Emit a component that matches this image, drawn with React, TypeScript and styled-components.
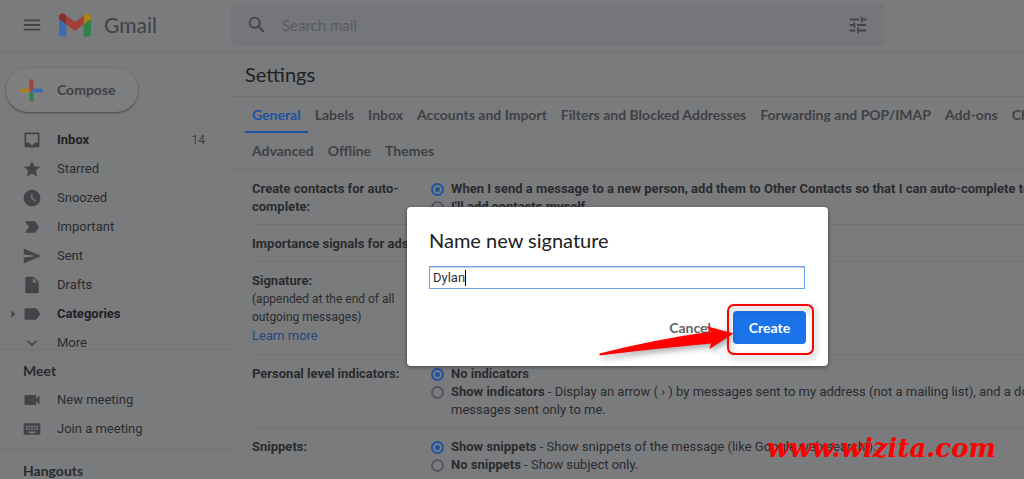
import React from 'react';
import styled, { createGlobalStyle } from 'styled-components';
import {
  MdArrowRight,
  MdExpandMore,
  MdInbox,
  MdInsertDriveFile,
  MdKeyboard,
  MdLabel,
  MdLabelImportant,
  MdMenu,
  MdSearch,
  MdSend,
  MdStar,
  MdTune,
  MdVideocam,
  MdWatchLater,
} from 'react-icons/md';

const color = {
  page: '#7a7b7d',
  field: '#747679',
  raised: '#7d7e80',
  line: '#717274',
  ink: '#202124',
  text: '#2a2b2e',
  muted: '#3f4144',
  icon: '#434447',
  hint: '#595b5e',
  blue: '#1d52a0',
  link: '#26457f',
  accent: '#1a73e8',
  mark: '#ff0000',
  logoRed: '#a1413a',
  logoDarkRed: '#86302b',
  logoYellow: '#aa821c',
  logoGreen: '#317f49',
  logoBlue: '#4069b0',
};

const display = "Lato, 'Open Sans', sans-serif";
const body = "Roboto, 'Liberation Sans', sans-serif";

const GlobalStyle = createGlobalStyle`
  * { box-sizing: border-box; }
  html, body { margin: 0; height: 100%; overflow: hidden; background: ${color.page}; }
  body { font-family: ${body}; font-size: 13px; color: ${color.text}; }
  #root { height: 100%; }
  button, input { font: inherit; color: inherit; }
`;

const Page = styled.div`
  position: relative;
  display: flex;
  flex-direction: column;
  height: 100vh;
  overflow: hidden;
`;

const Header = styled.header`
  flex: none;
  display: flex;
  align-items: flex-start;
  border-bottom: 1px solid ${color.line};
  height: 53px;
`;

const Brand = styled.div`
  flex: none;
  display: flex;
  align-items: center;
  width: 231px;
  height: 49px;
  padding-left: 21px;
`;

const IconButton = styled.button`
  display: flex;
  padding: 0;
  border: 0;
  background: none;
  color: ${color.icon};
  font-size: 22px;
`;

const Logo = styled.svg`
  display: block;
  width: 32px;
  height: 24px;
  margin: 0 13px 0 16px;
`;

const BrandName = styled.span`
  font: 400 21px/24px ${display};
  color: ${color.muted};
`;

const SearchBar = styled.form`
  flex: 0 1 653px;
  display: flex;
  align-items: center;
  gap: 12px;
  height: 43px;
  margin-top: 3px;
  padding: 0 15px;
  border-radius: 6px;
  background: ${color.field};
`;

const SearchInput = styled.input`
  flex: 1;
  min-width: 0;
  border: 0;
  outline: 0;
  background: none;
  font: 400 15px/20px ${display};
  &::placeholder { color: ${color.hint}; opacity: 1; }
`;

const Columns = styled.div`
  flex: 1;
  display: flex;
  min-height: 0;
`;

const Sidebar = styled.aside`
  flex: none;
  display: flex;
  flex-direction: column;
  width: 231px;
`;

const Compose = styled.button`
  flex: none;
  align-self: flex-start;
  display: flex;
  align-items: center;
  gap: 14px;
  height: 44px;
  margin: 15px 0 13px 6px;
  padding: 0 22px 0 14px;
  border: 0;
  border-radius: 22px;
  background: ${color.raised};
  box-shadow: 0 1px 2px rgba(32, 33, 36, 0.4), 0 1px 3px rgba(32, 33, 36, 0.2);
  color: ${color.muted};
  font: 700 14px/20px ${display};
`;

const PlusIcon = styled.svg`
  display: block;
  width: 23px;
  height: 23px;
`;

const Folders = styled.nav`
  flex: none;
  height: 224px;
  overflow: hidden;
`;

const NavLink = styled.a<{ $strong?: boolean }>`
  display: grid;
  grid-template-columns: 22px 35px 1fr auto;
  align-items: center;
  height: 29px;
  padding-right: 26px;
  color: ${(p) => (p.$strong ? color.ink : color.text)};
  font-size: 13px;
  font-weight: ${(p) => (p.$strong ? 700 : 400)};
  text-decoration: none;
`;

const Caret = styled.span`
  display: flex;
  justify-content: flex-end;
  color: ${color.icon};
  font-size: 18px;
`;

const NavIcon = styled.span`
  display: flex;
  color: ${color.icon};
  font-size: 20px;
`;

const Count = styled.span`
  color: ${color.muted};
  font-size: 12px;
  font-weight: 400;
`;

const SideSection = styled.section`
  flex: none;
  padding: 7px 0 6px;
  border-top: 1px solid ${color.line};
`;

const SideTitle = styled.h2`
  margin: 0;
  padding-left: 23px;
  color: ${color.text};
  font: 700 14px/28px ${display};
`;

const Main = styled.main`
  flex: 1;
  min-width: 0;
  overflow: hidden;
`;

const Title = styled.h1`
  margin: 0;
  padding: 0 14px;
  border-bottom: 1px solid ${color.line};
  color: ${color.ink};
  font: 400 20px/43px ${display};
  height: 44px;
`;

const Tabs = styled.nav`
  padding: 0 14px;
  border-bottom: 1px solid ${color.line};
`;

const TabRow = styled.div`
  display: flex;
  white-space: nowrap;
`;

const Tab = styled.a<{ $active?: boolean }>`
  height: 36px;
  padding: 0 7px;
  border-bottom: 2px solid ${(p) => (p.$active ? color.blue : 'transparent')};
  color: ${(p) => (p.$active ? color.blue : color.muted)};
  font: 700 14px/36px ${display};
  text-decoration: none;
`;

const Rows = styled.div`
  min-width: 900px;
  padding-left: 21px;
`;

const Setting = styled.section`
  display: grid;
  grid-template-columns: 179px 1fr;
  padding: 10px 0 8px;
  border-bottom: 1px solid ${color.line};
  line-height: 18px;
`;

const SettingName = styled.h3`
  margin: 0;
  color: ${color.text};
  font-size: 13px;
  font-weight: 700;
  white-space: pre;
`;

const Note = styled.p`
  margin: 0;
  font-size: 12px;
  white-space: pre;
`;

const TextLink = styled.a`
  display: block;
  line-height: 20px;
  color: ${color.link};
  text-decoration: none;
`;

const Option = styled.label`
  display: flex;
  align-items: flex-start;
  gap: 7px;
  white-space: pre;
`;

const Radio = styled.input`
  appearance: none;
  flex: none;
  width: 13px;
  height: 13px;
  margin: 3px 0 0;
  border: 2px solid #55565d;
  border-radius: 50%;
  &:checked {
    border-color: ${color.blue};
    background: radial-gradient(circle, ${color.blue} 0 2px, transparent 3px);
  }
`;

const Dialog = styled.div`
  position: absolute;
  top: 207px;
  left: 407px;
  width: 421px;
  padding: 22px;
  border-radius: 4px;
  background: #fff;
  box-shadow: 0 1px 4px rgba(0, 0, 0, 0.45);
`;

const DialogTitle = styled.h2`
  margin: 0 0 14px;
  color: ${color.ink};
  font: 400 20px/23px ${display};
`;

const NameField = styled.div`
  display: flex;
  align-items: center;
  height: 23px;
  margin-right: 1px;
  padding-left: 3px;
  border: 1px solid #6ea1f7;
  box-shadow: inset 0 1px 1px #c8ccd4;
  font-size: 13px;
`;

const NameInput = styled.input`
  field-sizing: content;
  padding: 0;
  border: 0;
  outline: 0;
  background: none;
  color: #333;
`;

const TextCursor = styled.span`
  width: 1px;
  height: 16px;
  background: #000;
`;

const Actions = styled.div`
  display: flex;
  justify-content: flex-end;
  align-items: center;
  gap: 22px;
  margin-top: 22px;
`;

const Cancel = styled.button`
  padding: 0;
  border: 0;
  background: none;
  color: #5f6368;
  font: 700 14px/20px ${display};
`;

const Create = styled.button`
  width: 73px;
  height: 33px;
  padding: 0;
  border: 0;
  border-radius: 4px;
  background: ${color.accent};
  color: #fff;
  font: 700 14px/20px ${display};
`;

const Callout = styled.svg`
  position: absolute;
  top: 90px;
  left: 185px;
  width: 230px;
  height: 65px;
  overflow: visible;
  pointer-events: none;
  filter: drop-shadow(2px 3px 3px rgba(0, 0, 0, 0.35));
`;

const Watermark = styled.div`
  position: absolute;
  right: 28px;
  bottom: 15px;
  color: ${color.mark};
  font: italic 700 26px/32px 'DejaVu Serif', serif;
`;

type Folder = {
  label: string;
  icon: React.ReactNode;
  strong?: boolean;
  count?: string;
  expandable?: boolean;
};

const folders: Folder[] = [
  { label: 'Inbox', icon: <MdInbox />, strong: true, count: '14' },
  { label: 'Starred', icon: <MdStar /> },
  { label: 'Snoozed', icon: <MdWatchLater /> },
  { label: 'Important', icon: <MdLabelImportant /> },
  { label: 'Sent', icon: <MdSend /> },
  { label: 'Drafts', icon: <MdInsertDriveFile /> },
  { label: 'Categories', icon: <MdLabel />, strong: true, expandable: true },
  { label: 'More', icon: <MdExpandMore /> },
];

const meetLinks: Folder[] = [
  { label: 'New meeting', icon: <MdVideocam /> },
  { label: 'Join a meeting', icon: <MdKeyboard /> },
];

const tabRows = [
  [
    'General',
    'Labels',
    'Inbox',
    'Accounts and Import',
    'Filters and Blocked Addresses',
    'Forwarding and POP/IMAP',
    'Add-ons',
    'Chat and Meet',
  ],
  ['Advanced', 'Offline', 'Themes'],
];

function NavItem({ item }: { item: Folder }) {
  return (
    <NavLink href="#" $strong={item.strong}>
      <Caret>{item.expandable && <MdArrowRight />}</Caret>
      <NavIcon>{item.icon}</NavIcon>
      <span>{item.label}</span>
      {item.count && <Count>{item.count}</Count>}
    </NavLink>
  );
}

function Choice(props: { group: string; checked?: boolean; title: string; detail?: string }) {
  return (
    <Option>
      <Radio type="radio" name={props.group} defaultChecked={props.checked} />
      <span>
        <b>{props.title}</b>
        {props.detail}
      </span>
    </Option>
  );
}

export default function App() {
  return (
    <>
      <GlobalStyle />
      <Page>
        <Header>
          <Brand>
            <IconButton aria-label="Main menu">
              <MdMenu />
            </IconButton>
            <Logo viewBox="0 0 32 24" aria-hidden="true">
              <path d="M0 5v16.500a2 2 0 0 0 2 2h5.300V10.500z" fill={color.logoBlue} />
              <path d="M24.700 10.500v13h5.300a2 2 0 0 0 2-2V5z" fill={color.logoGreen} />
              <path d="M24.700 2.500v9L32 6V4c0-3.300-3.300-4.600-5.600-2.900z" fill={color.logoYellow} />
              <path d="M7.300 11.500v-9L16 9l8.700-6.500v9L16 18z" fill={color.logoRed} />
              <path d="M0 4v2l7.300 5.500v-9L5.600 1.100C3.300-.6 0 .7 0 4z" fill={color.logoDarkRed} />
            </Logo>
            <BrandName>Gmail</BrandName>
          </Brand>
          <SearchBar role="search">
            <IconButton type="button" aria-label="Search">
              <MdSearch />
            </IconButton>
            <SearchInput aria-label="Search mail" placeholder="Search mail" />
            <IconButton type="button" aria-label="Search options">
              <MdTune />
            </IconButton>
          </SearchBar>
        </Header>

        <Columns>
          <Sidebar>
            <Compose>
              <PlusIcon viewBox="0 0 23 23" aria-hidden="true">
                <path d="M9.500 0.500h4v9l-4 4z" fill={color.logoRed} />
                <path d="M0.500 9.500h9v4h-9z" fill={color.logoYellow} />
                <path d="M9.500 13.500h4v9h-4z" fill={color.logoGreen} />
                <path d="M13.500 9.500h9v4h-13z" fill={color.logoBlue} />
              </PlusIcon>
              Compose
            </Compose>
            <Folders aria-label="Folders">
              {folders.map((f) => (
                <NavItem key={f.label} item={f} />
              ))}
            </Folders>
            <SideSection>
              <SideTitle>Meet</SideTitle>
              {meetLinks.map((f) => (
                <NavItem key={f.label} item={f} />
              ))}
            </SideSection>
            <SideSection>
              <SideTitle>Hangouts</SideTitle>
            </SideSection>
          </Sidebar>

          <Main>
            <Title>Settings</Title>
            <Tabs aria-label="Settings sections">
              {tabRows.map((row) => (
                <TabRow key={row[0]}>
                  {row.map((name) => (
                    <Tab key={name} href="#" $active={name === 'General'}>
                      {name}
                    </Tab>
                  ))}
                </TabRow>
              ))}
            </Tabs>
            <Rows>
              <Setting>
                <SettingName>{'Create contacts for auto-\ncomplete:'}</SettingName>
                <div>
                  <Choice
                    group="contacts"
                    checked
                    title="When I send a message to a new person, add them to Other Contacts so that I can auto-complete to them next time"
                  />
                  <Choice group="contacts" title="I'll add contacts myself" />
                </div>
              </Setting>
              <Setting>
                <SettingName>Importance signals for ads:</SettingName>
              </Setting>
              <Setting>
                <div>
                  <SettingName>Signature:</SettingName>
                  <Note>{'(appended at the end of all\noutgoing messages)'}</Note>
                  <TextLink href="#">Learn more</TextLink>
                </div>
              </Setting>
              <Setting>
                <SettingName>Personal level indicators:</SettingName>
                <div>
                  <Choice group="indicators" checked title="No indicators" />
                  <Choice
                    group="indicators"
                    title="Show indicators"
                    detail={
                      ' - Display an arrow ( › ) by messages sent to my address (not a mailing list), and a double arrow ( » ) by\nmessages sent only to me.'
                    }
                  />
                </div>
              </Setting>
              <Setting>
                <SettingName>Snippets:</SettingName>
                <div>
                  <Choice
                    group="snippets"
                    checked
                    title="Show snippets"
                    detail=" - Show snippets of the message (like Google web search!)."
                  />
                  <Choice group="snippets" title="No snippets" detail=" - Show subject only." />
                </div>
              </Setting>
            </Rows>
          </Main>
        </Columns>

        <Dialog role="dialog" aria-labelledby="dialog-title">
          <DialogTitle id="dialog-title">Name new signature</DialogTitle>
          <NameField>
            <NameInput aria-labelledby="dialog-title" defaultValue="Dylan" />
            <TextCursor />
          </NameField>
          <Actions>
            <Cancel>Cancel</Cancel>
            <Create>Create</Create>
          </Actions>
          <Callout viewBox="0 0 230 65" aria-hidden="true">
            <rect x="136" y="8" width="85" height="49" rx="6" fill="none" stroke={color.mark} strokeWidth="2" />
            <path
              d="M7.500 56.500Q60 43 119 34.500L114 29L141.500 36.500L117.500 52L119 46.500Q60 52 7.500 58.500z"
              fill={color.mark}
            />
          </Callout>
        </Dialog>
        <Watermark>www.wizita.com</Watermark>
      </Page>
    </>
  );
}
